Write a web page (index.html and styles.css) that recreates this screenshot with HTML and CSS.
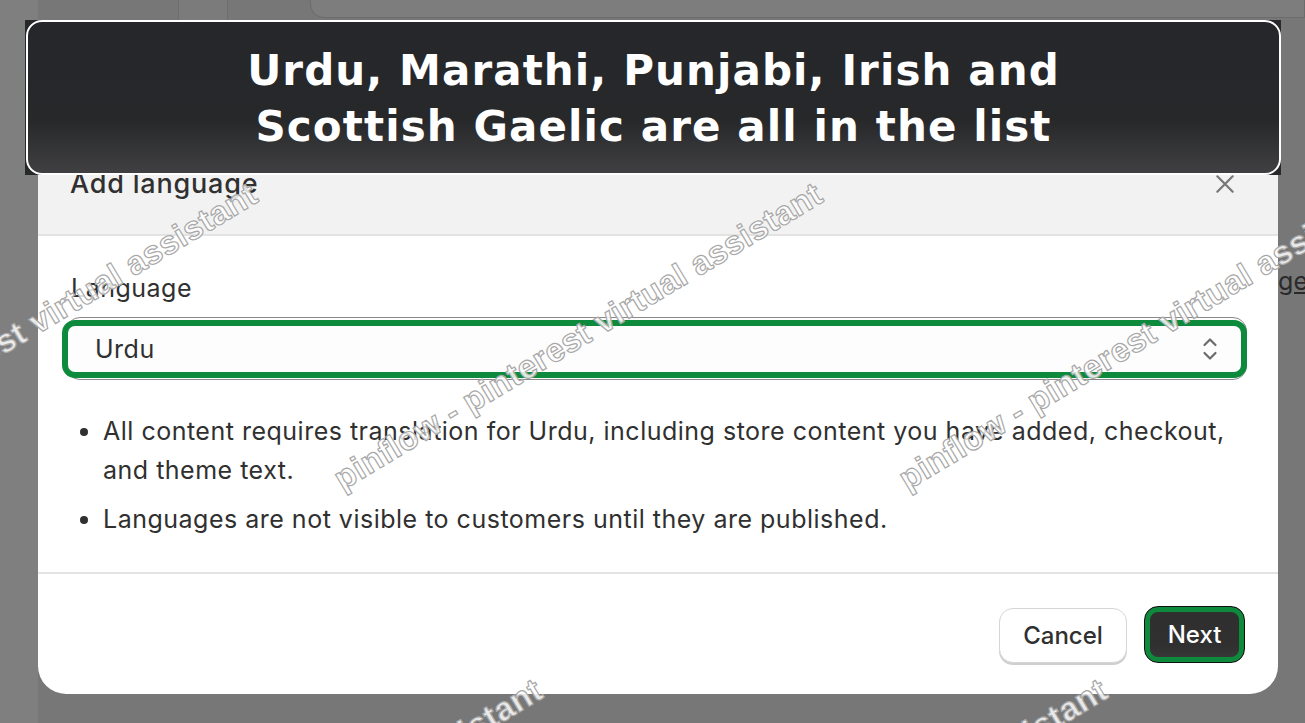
FILE: index.html
```html
<!DOCTYPE html>
<html lang="en">
<head>
<meta charset="utf-8">
<title>Add language</title>
<link rel="stylesheet" href="styles.css">
</head>
<body>
<div class="screen">
  <div class="backdrop">
    <div class="bg-top">
      <div class="bg-tab"></div>
      <div class="bg-search"></div>
    </div>
    <div class="bg-link">Language</div>
  </div>

  <div class="modal" role="dialog">
    <div class="modal-header">
      <h2 class="modal-title">Add language</h2>
      <svg class="close-icon" viewBox="0 0 20 20" width="22" height="22" aria-hidden="true">
        <path d="M3 3 L17 17 M17 3 L3 17" stroke="#777" stroke-width="2" fill="none" stroke-linecap="round"/>
      </svg>
    </div>
    <div class="modal-body">
      <label class="field-label">Language</label>
      <div class="select">
        <span class="select-value">Urdu</span>
        <svg class="select-icon" viewBox="0 0 16 26" width="16" height="26" aria-hidden="true">
          <path d="M2.5 9 L8 3.5 L13.5 9" stroke="#6b6b6b" stroke-width="2.2" fill="none" stroke-linecap="round" stroke-linejoin="round"/>
          <path d="M2.5 17 L8 22.5 L13.5 17" stroke="#6b6b6b" stroke-width="2.2" fill="none" stroke-linecap="round" stroke-linejoin="round"/>
        </svg>
        <div class="focus-ring"></div>
      </div>
      <ul class="notes">
        <li>All content requires translation for Urdu, including store content you have added, checkout, and theme text.</li>
        <li>Languages are not visible to customers until they are published.</li>
      </ul>
    </div>
    <div class="modal-footer">
      <button class="btn btn-secondary">Cancel</button>
      <button class="btn btn-primary">Next</button>
    </div>
  </div>

  <div class="banner">
    <div class="banner-inner">
      <p class="banner-text">Urdu, Marathi, Punjabi, Irish and<br>Scottish Gaelic are all in the list</p>
    </div>
  </div>

  <div class="wm wm-1">pinflow - pinterest virtual assistant</div>
  <div class="wm wm-2">pinflow - pinterest virtual assistant</div>
  <div class="wm wm-3">pinflow - pinterest virtual assistant</div>
  <div class="wm wm-4">pinflow - pinterest virtual assistant</div>
  <div class="wm wm-5">pinflow - pinterest virtual assistant</div>
</div>
</body>
</html>
```

FILE: styles.css
```css
* { box-sizing: border-box; }

html, body {
  margin: 0;
  padding: 0;
}

body {
  background: #767676;
  font-family: Inter, "Liberation Sans", sans-serif;
  color: #303030;
}

.screen {
  position: relative;
  width: 1305px;
  height: 723px;
  overflow: hidden;
  background: linear-gradient(to right, #7f7f7f 0, #7f7f7f 38px, #777777 38px);
}

.backdrop {
  position: absolute;
  inset: 0;
}

.bg-top {
  display: flex;
  gap: 50px;
  padding-left: 178px;
}

.bg-tab {
  width: 50px;
  height: 20px;
  border-left: 1px solid #6e6e6e;
  border-right: 1px solid #6e6e6e;
  background: #7b7b7b;
}

.bg-search {
  width: 1000px;
  height: 18px;
  margin-left: 32px;
  border: 1px solid #6c6c6c;
  border-top: none;
  border-radius: 0 0 0 14px;
  background: #7d7d7d;
}

.bg-link {
  position: absolute;
  right: -3px;
  top: 266px;
  font-size: 25px;
  color: #2a2a2a;
  text-decoration: underline;
  white-space: nowrap;
}

/* Modal */
.modal {
  position: absolute;
  left: 38px;
  top: 132px;
  width: 1240px;
  height: 562px;
  background: #ffffff;
  border-radius: 28px;
  overflow: hidden;
  display: flex;
  flex-direction: column;
}

.modal-header {
  height: 104px;
  background: #f2f2f2;
  border-bottom: 2px solid #e3e3e3;
  display: flex;
  align-items: flex-start;
  justify-content: space-between;
  padding: 34px 42px 0 32px;
}

.modal-title {
  margin: 0;
  font-size: 27px;
  line-height: 36px;
  font-weight: 550;
  letter-spacing: 0.8px;
  color: #303030;
}

.close-icon {
  margin-top: 7px;
}

.modal-body {
  padding: 34px 32px 33px 33px;
  border-bottom: 2px solid #e3e3e3;
  font-size: 25px;
  letter-spacing: 0.5px;
}

.field-label {
  display: block;
  line-height: 36px;
  color: #303030;
  margin-bottom: 11px;
}

.select {
  position: relative;
  height: 63px;
  margin-left: -5px;
  margin-right: -1px;
  border: 1.5px solid #8a8a8a;
  border-radius: 14px;
  background: #fdfdfd;
  display: flex;
  align-items: center;
  justify-content: space-between;
  padding: 0 28px 0 28px;
}

.select-value {
  color: #303030;
}

.select-icon {
  margin-top: 1px;
}

.focus-ring {
  position: absolute;
  left: -5px;
  top: 2px;
  right: -1px;
  bottom: 1px;
  border: 6.5px solid #0d8a3c;
  border-radius: 13px;
  pointer-events: none;
}

.notes {
  margin: 32px 0 0 0;
  padding: 0 0 0 32px;
  line-height: 39px;
  color: #303030;
}

.notes li + li {
  margin-top: 10px;
}

.notes li::marker {
  font-size: 25px;
}

.modal-footer {
  flex: 1;
  display: flex;
  align-items: center;
  justify-content: flex-end;
  gap: 17px;
  padding: 0 33px 0 0;
}

.btn {
  font-family: Inter, "Liberation Sans", sans-serif;
  font-size: 24px;
  font-weight: 550;
  border-radius: 14px;
  cursor: pointer;
}

.btn-secondary {
  width: 128px;
  height: 55px;
  margin-top: 2px;
  background: #ffffff;
  color: #303030;
  border: 1.5px solid #d6d6d6;
  box-shadow: 0 2px 0 #cfcfcf;
}

.btn-primary {
  width: 101px;
  height: 57px;
  background: linear-gradient(#2f2f2f, #303030 70%, #3a3a3a);
  color: #ffffff;
  border: 1.5px solid #111;
  box-shadow: inset 0 0 0 5px #0d8a3c;
}

/* Banner */
.banner {
  position: absolute;
  left: 25px;
  top: 20px;
  width: 1256px;
  height: 155px;
  background: #27282a;
}

.banner-inner {
  height: 100%;
  border: 2.5px solid #ffffff;
  border-radius: 16px;
  margin-left: 1px;
  background: linear-gradient(#26272a 0, #27282a 65%, #38383a 88%, #404042 100%);
  display: flex;
  align-items: center;
  justify-content: center;
}

.banner-text {
  margin: 0;
  padding-top: 2px;
  font-family: "DejaVu Sans", sans-serif;
  font-weight: bold;
  font-size: 42px;
  line-height: 56px;
  letter-spacing: 1.1px;
  text-align: center;
  color: #ffffff;
}

/* Watermarks */
.wm {
  position: absolute;
  font-family: "Liberation Sans", sans-serif;
  font-weight: bold;
  font-size: 33px;
  line-height: 33px;
  letter-spacing: 0.5px;
  white-space: nowrap;
  color: rgba(255, 255, 255, 0.85);
  -webkit-text-stroke: 1.2px #a8a8a8;
  transform-origin: 0 100%;
  transform: rotate(-31deg);
  pointer-events: none;
}

.wm-1 { left: -220px; top: 462px; }
.wm-2 { left: 345px; top: 462px; }
.wm-3 { left: 910px; top: 462px; }
.wm-4 { left: 65px; top: 958px; }
.wm-5 { left: 630px; top: 958px; }
```
